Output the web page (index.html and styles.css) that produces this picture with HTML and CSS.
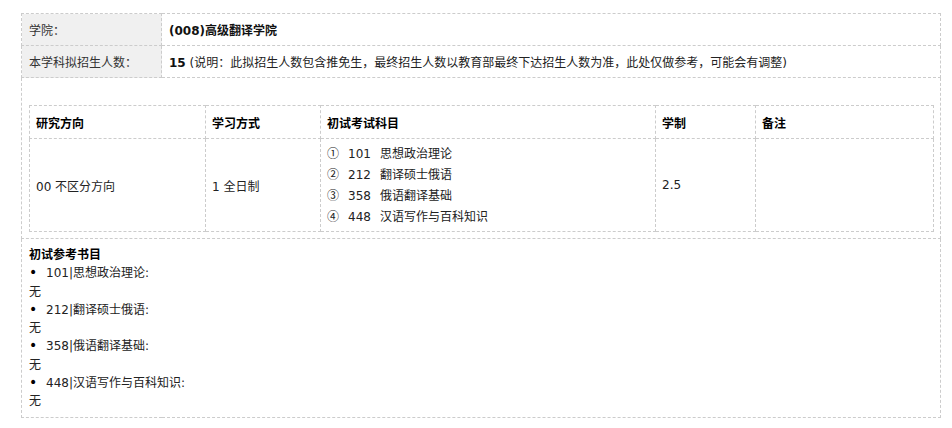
FILE: index.html
```html
<!DOCTYPE html>
<html lang="zh-CN">
<head>
    <meta charset="UTF-8">
    <meta name="viewport" content="width=device-width, initial-scale=1.0">
    <title>专业目录</title>
    <link rel="stylesheet" href="styles.css">
</head>
<body>
    <div class="wrap">
        <table class="info">
            <tr>
                <td class="label">学院：</td>
                <td class="value"><b>(008)高级翻译学院</b></td>
            </tr>
            <tr>
                <td class="label">本学科拟招生人数：</td>
                <td class="value"><b>15</b> (说明：此拟招生人数包含推免生，最终招生人数以教育部最终下达招生人数为准，此处仅做参考，可能会有调整)</td>
            </tr>
            <tr>
                <td class="box" colspan="2">
                    <table class="plan">
                        <tr>
                            <th class="c1">研究方向</th>
                            <th class="c2">学习方式</th>
                            <th class="c3">初试考试科目</th>
                            <th class="c4">学制</th>
                            <th class="c5">备注</th>
                        </tr>
                        <tr>
                            <td>00 不区分方向</td>
                            <td>1 全日制</td>
                            <td class="subjects">
                                <div><span class="no">①</span><span class="code">101</span>思想政治理论</div>
                                <div><span class="no">②</span><span class="code">212</span>翻译硕士俄语</div>
                                <div><span class="no">③</span><span class="code">358</span>俄语翻译基础</div>
                                <div><span class="no">④</span><span class="code">448</span>汉语写作与百科知识</div>
                            </td>
                            <td>2.5</td>
                            <td></td>
                        </tr>
                    </table>
                </td>
            </tr>
            <tr>
                <td class="books" colspan="2">
                    <div class="books-title">初试参考书目</div>
                    <ul><li>101|思想政治理论:</li></ul>
                    <div>无</div>
                    <ul><li>212|翻译硕士俄语:</li></ul>
                    <div>无</div>
                    <ul><li>358|俄语翻译基础:</li></ul>
                    <div>无</div>
                    <ul><li>448|汉语写作与百科知识:</li></ul>
                    <div>无</div>
                </td>
            </tr>
        </table>
    </div>
</body>
</html>
```

FILE: styles.css
```css
body {
    margin: 0;
    font-family: "DejaVu Sans", "Noto Sans CJK SC", sans-serif;
    font-size: 12px;
    color: #222;
    background-color: #fff;
}
.wrap {
    padding: 13px 0 0 21px;
}
table {
    border-collapse: collapse;
}
.info {
    width: 920px;
}
.info > tbody > tr > td {
    border: 1px dashed #ccc; /* 虚线边框 */
}
.label {
    width: 125px;
    height: 31px;
    padding: 0 7px;
    background-color: #f0f0f0;
    color: #333;
}
.value {
    padding: 0 7px;
}
.value b {
    color: #111;
}
.box {
    padding: 27px 6px 6px 7px;
}
.plan {
    width: 905px;
}
.plan th, .plan td {
    border: 1px dashed #ccc;
    padding: 0 6px;
    text-align: left;
    vertical-align: middle;
}
.plan th {
    height: 32px;
    color: #000;
}
.plan td {
    height: 92px;
}
.c1 { width: 163px; }
.c2 { width: 102px; }
.c3 { width: 322px; }
.c4 { width: 87px; }
.subjects div {
    line-height: 20px;
}
.no {
    display: inline-block;
    width: 21px;
    font-family: "Noto Sans CJK SC", sans-serif;
}
.code {
    display: inline-block;
    width: 32px;
}
.books {
    padding: 7px 7px 6px 7px;
    line-height: 18.3px;
}
.books-title {
    font-weight: bold;
    color: #000;
}
.books ul {
    margin: 0;
    padding: 0;
    list-style: none;
}
.books li::before {
    content: "•";
    display: inline-block;
    width: 17px;
    font-size: 14px;
    line-height: 10px;
    color: #000;
}
```
